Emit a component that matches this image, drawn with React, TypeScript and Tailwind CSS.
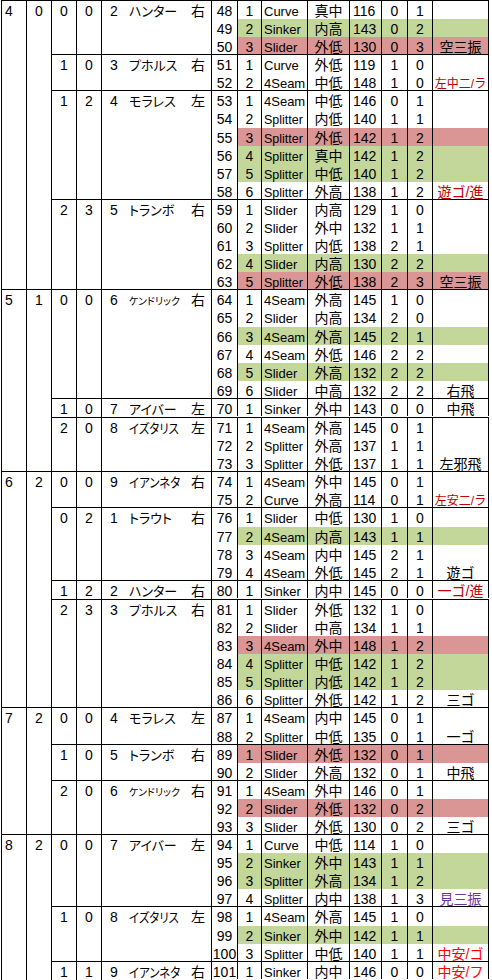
import clsx from 'clsx';

type Pitch = {
  no: number;
  seq: number;
  type: string;
  loc: string;
  kph: number;
  b: number;
  s: number;
  fill: '' | 'g' | 'r';
  res: string;
  tone: '' | 'dark' | 'red' | 'purple';
};

type Batter = { c3: string; c4: string; order: string; name: string; hand: string; pitches: Pitch[] };
type Inning = { inning: string; c2: string; batters: Batter[] };

function p(
  no: number,
  seq: number,
  type: string,
  loc: string,
  kph: number,
  b: number,
  s: number,
  fill: Pitch['fill'] = '',
  res = '',
  tone: Pitch['tone'] = ''
): Pitch {
  return { no, seq, type, loc, kph, b, s, fill, res, tone };
}

const innings: Inning[] = [
  {
    inning: '4',
    c2: '0',
    batters: [
      {
        c3: '0', c4: '0', order: '2', name: 'ハンター', hand: '右',
        pitches: [
          p(48, 1, 'Curve', '真中', 116, 0, 1),
          p(49, 2, 'Sinker', '内高', 143, 0, 2, 'g'),
          p(50, 3, 'Slider', '外低', 130, 0, 3, 'r', '空三振'),
        ],
      },
      {
        c3: '1', c4: '0', order: '3', name: 'プホルス', hand: '右',
        pitches: [
          p(51, 1, 'Curve', '外低', 119, 1, 0),
          p(52, 2, '4Seam', '中低', 148, 1, 0, '', '左中二/ラ', 'dark'),
        ],
      },
      {
        c3: '1', c4: '2', order: '4', name: 'モラレス', hand: '左',
        pitches: [
          p(53, 1, '4Seam', '中低', 146, 0, 1),
          p(54, 2, 'Splitter', '内低', 140, 1, 1),
          p(55, 3, 'Splitter', '外低', 142, 1, 2, 'r'),
          p(56, 4, 'Splitter', '真中', 142, 1, 2, 'g'),
          p(57, 5, 'Splitter', '中低', 140, 1, 2, 'g'),
          p(58, 6, 'Splitter', '外高', 138, 1, 2, '', '遊ゴ/進', 'dark'),
        ],
      },
      {
        c3: '2', c4: '3', order: '5', name: 'トランボ', hand: '右',
        pitches: [
          p(59, 1, 'Slider', '内高', 129, 1, 0),
          p(60, 2, 'Slider', '外中', 132, 1, 1),
          p(61, 3, 'Splitter', '内低', 138, 2, 1),
          p(62, 4, 'Slider', '内高', 130, 2, 2, 'g'),
          p(63, 5, 'Splitter', '外低', 138, 2, 3, 'r', '空三振'),
        ],
      },
    ],
  },
  {
    inning: '5',
    c2: '1',
    batters: [
      {
        c3: '0', c4: '0', order: '6', name: 'ケンドリック', hand: '右',
        pitches: [
          p(64, 1, '4Seam', '外高', 145, 1, 0),
          p(65, 2, 'Slider', '内高', 134, 2, 0),
          p(66, 3, '4Seam', '外高', 145, 2, 1, 'g'),
          p(67, 4, '4Seam', '外低', 146, 2, 2),
          p(68, 5, 'Slider', '外高', 132, 2, 2, 'g'),
          p(69, 6, 'Slider', '中高', 132, 2, 2, '', '右飛'),
        ],
      },
      {
        c3: '1', c4: '0', order: '7', name: 'アイバー', hand: '左',
        pitches: [p(70, 1, 'Sinker', '外中', 143, 0, 0, '', '中飛')],
      },
      {
        c3: '2', c4: '0', order: '8', name: 'イズタリス', hand: '左',
        pitches: [
          p(71, 1, '4Seam', '外高', 145, 0, 1),
          p(72, 2, 'Splitter', '外高', 137, 1, 1),
          p(73, 3, 'Splitter', '外低', 137, 1, 1, '', '左邪飛'),
        ],
      },
    ],
  },
  {
    inning: '6',
    c2: '2',
    batters: [
      {
        c3: '0', c4: '0', order: '9', name: 'イアンネタ', hand: '右',
        pitches: [
          p(74, 1, '4Seam', '外中', 145, 0, 1),
          p(75, 2, 'Curve', '外高', 114, 0, 1, '', '左安二/ラ', 'dark'),
        ],
      },
      {
        c3: '0', c4: '2', order: '1', name: 'トラウト', hand: '右',
        pitches: [
          p(76, 1, 'Slider', '中低', 130, 1, 0),
          p(77, 2, '4Seam', '内高', 143, 1, 1, 'g'),
          p(78, 3, '4Seam', '内中', 145, 2, 1),
          p(79, 4, '4Seam', '外低', 145, 2, 1, '', '遊ゴ'),
        ],
      },
      {
        c3: '1', c4: '2', order: '2', name: 'ハンター', hand: '右',
        pitches: [p(80, 1, 'Sinker', '内中', 145, 0, 0, '', '一ゴ/進', 'dark')],
      },
      {
        c3: '2', c4: '3', order: '3', name: 'プホルス', hand: '右',
        pitches: [
          p(81, 1, 'Slider', '外低', 132, 1, 0),
          p(82, 2, 'Slider', '中高', 134, 1, 1),
          p(83, 3, '4Seam', '外中', 148, 1, 2, 'r'),
          p(84, 4, 'Splitter', '中低', 142, 1, 2, 'g'),
          p(85, 5, 'Splitter', '内低', 142, 1, 2, 'g'),
          p(86, 6, 'Splitter', '外低', 142, 1, 2, '', '三ゴ'),
        ],
      },
    ],
  },
  {
    inning: '7',
    c2: '2',
    batters: [
      {
        c3: '0', c4: '0', order: '4', name: 'モラレス', hand: '左',
        pitches: [
          p(87, 1, '4Seam', '内中', 145, 0, 1),
          p(88, 2, 'Splitter', '中低', 135, 0, 1, '', '一ゴ'),
        ],
      },
      {
        c3: '1', c4: '0', order: '5', name: 'トランボ', hand: '右',
        pitches: [
          p(89, 1, 'Slider', '外低', 132, 0, 1, 'r'),
          p(90, 2, 'Slider', '外高', 132, 0, 1, '', '中飛'),
        ],
      },
      {
        c3: '2', c4: '0', order: '6', name: 'ケンドリック', hand: '右',
        pitches: [
          p(91, 1, '4Seam', '外中', 146, 0, 1),
          p(92, 2, 'Slider', '外低', 132, 0, 2, 'r'),
          p(93, 3, 'Slider', '外低', 130, 0, 2, '', '三ゴ'),
        ],
      },
    ],
  },
  {
    inning: '8',
    c2: '2',
    batters: [
      {
        c3: '0', c4: '0', order: '7', name: 'アイバー', hand: '左',
        pitches: [
          p(94, 1, 'Curve', '中低', 114, 1, 0),
          p(95, 2, 'Sinker', '外中', 143, 1, 1, 'g'),
          p(96, 3, 'Splitter', '外高', 134, 1, 2, 'g'),
          p(97, 4, 'Splitter', '内中', 138, 1, 3, '', '見三振', 'purple'),
        ],
      },
      {
        c3: '1', c4: '0', order: '8', name: 'イズタリス', hand: '左',
        pitches: [
          p(98, 1, '4Seam', '外高', 145, 1, 0),
          p(99, 2, 'Sinker', '外中', 142, 1, 1, 'g'),
          p(100, 3, 'Splitter', '中低', 140, 1, 1, '', '中安/ゴ', 'red'),
        ],
      },
      {
        c3: '1', c4: '1', order: '9', name: 'イアンネタ', hand: '右',
        pitches: [p(101, 1, 'Sinker', '内中', 146, 0, 0, '', '中安/フ', 'red')],
      },
    ],
  },
];

// the sheet's rows are a touch over 18px, so a few get an extra pixel
const TALL = [54, 65, 76, 87, 98];

const cell = 'shrink-0 border-r border-black pt-[3px] whitespace-nowrap';

function PitchRow({ p, last }: { p: Pitch; last: boolean }) {
  const tall = TALL.includes(p.no);
  const h = last ? (tall ? 'h-[18px]' : 'h-[17px]') : tall ? 'h-[19px]' : 'h-[18px]';
  const fill = p.fill === 'g' ? 'bg-[#c4d79b]' : p.fill === 'r' ? 'bg-[#da9694]' : '';
  const tone =
    p.tone === 'dark'
      ? 'text-[#c00000]'
      : p.tone === 'red'
        ? 'text-[#ff0000]'
        : p.tone === 'purple'
          ? 'text-[#7030a0]'
          : '';
  const smallRes = p.res.length >= 5;

  return (
    <div className={clsx('flex', h)}>
      <div className={clsx(cell, 'w-[26px] text-center')}>{p.no}</div>
      <div className={clsx('flex flex-1', fill)}>
        <div className={clsx(cell, 'w-[24px] text-center')}>{p.seq}</div>
        <div className={clsx(cell, 'w-[46px] pl-[2px]')}>
          {p.type === 'Splitter' ? (
            <span className="text-[12.5px]">{p.type}</span>
          ) : (
            <span className="text-[13px]">{p.type}</span>
          )}
        </div>
        <div className={clsx(cell, 'w-[42px] text-center')}>{p.loc}</div>
        <div className={clsx(cell, 'w-[32px] pl-[3px]')}>{p.kph}</div>
        <div className={clsx(cell, 'w-[26px] text-center')}>{p.b}</div>
        <div className={clsx(cell, 'w-[25px] text-center')}>{p.s}</div>
        <div className={clsx(cell, 'w-[56px] text-center', tone)}>
          {smallRes ? <span className="text-[12px]">{p.res}</span> : p.res}
        </div>
      </div>
    </div>
  );
}

function BatterName({ name }: { name: string }) {
  if (name.length > 5) return <span className="text-[10px]">{name}</span>;
  if (name.length > 4)
    return <span className="inline-block origin-left scale-x-[0.88] text-[13px]">{name}</span>;
  return <span className="text-[13px]">{name}</span>;
}

function BatterBlock({ b, last }: { b: Batter; last: boolean }) {
  return (
    <div className={clsx('flex', !last && 'border-b border-black')}>
      <div className={clsx(cell, 'w-[25px] text-center')}>{b.c3}</div>
      <div className={clsx(cell, 'w-[25px] text-center')}>{b.c4}</div>
      <div className={clsx(cell, 'flex w-[110px]')}>
        <span className="w-[24px] shrink-0 text-center">{b.order}</span>
        <span className="w-[59px] shrink-0 pl-[3px] [font-feature-settings:'palt']">
          <BatterName name={b.name} />
        </span>
        <span className="flex-1 text-center">{b.hand}</span>
      </div>
      <div className="flex flex-1 flex-col">
        {b.pitches.map((pt, i) => (
          <PitchRow key={pt.no} p={pt} last={i === b.pitches.length - 1} />
        ))}
      </div>
    </div>
  );
}

export default function App() {
  return (
    <div className="min-h-screen bg-white font-['Liberation_Sans','Noto_Sans_CJK_JP',sans-serif] text-[14px] leading-[14px] text-black">
      <div className="ml-[1px] w-[488px] border-l border-t border-black">
        {innings.map((inn) => (
          <div key={inn.inning} className="flex border-b border-black">
            <div className={clsx(cell, 'w-[25px] pl-[3px]')}>{inn.inning}</div>
            <div className={clsx(cell, 'w-[25px] text-center')}>{inn.c2}</div>
            <div className="flex flex-1 flex-col">
              {inn.batters.map((b, i) => (
                <BatterBlock key={i} b={b} last={i === inn.batters.length - 1} />
              ))}
            </div>
          </div>
        ))}
      </div>
    </div>
  );
}
